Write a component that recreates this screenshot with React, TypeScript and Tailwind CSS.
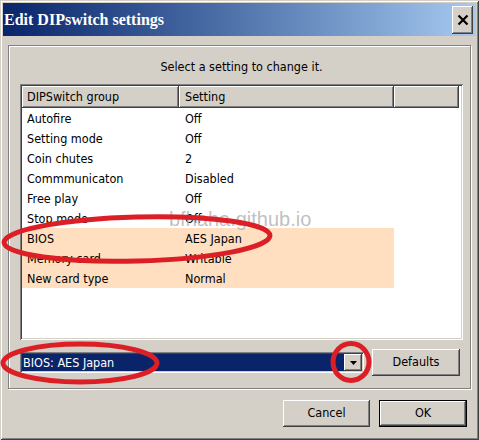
import React from "react";

const raised =
  "shadow-[inset_-1px_-1px_0_#404040,inset_1px_1px_0_#ffffff,inset_-2px_-2px_0_#808080,inset_2px_2px_0_#d4d0c8]";
const sunken =
  "shadow-[inset_1px_1px_0_#808080,inset_-1px_-1px_0_#ffffff,inset_2px_2px_0_#404040,inset_-2px_-2px_0_#d4d0c8]";

const rows: [string, string, boolean][] = [
  ["Autofire", "Off", false],
  ["Setting mode", "Off", false],
  ["Coin chutes", "2", false],
  ["Commmunicaton", "Disabled", false],
  ["Free play", "Off", false],
  ["Stop mode", "Off", false],
  ["BIOS", "AES Japan", true],
  ["Memory card", "Writable", true],
  ["New card type", "Normal", true],
];

export default function App() {
  return (
    <div
      className="relative w-[479px] h-[440px] overflow-hidden bg-[#d4d0c8] p-[3px] flex flex-col text-[12.5px] text-black shadow-[inset_1px_1px_0_#d4d0c8,inset_-1px_-1px_0_#404040,inset_2px_2px_0_#ffffff,inset_-2px_-2px_0_#808080]"
      style={{ fontFamily: '"DejaVu Sans Condensed", "DejaVu Sans", sans-serif' }}
    >
      {/* Title bar */}
      <div className="h-[33px] flex items-center justify-between pl-[1px] pr-[3px] bg-gradient-to-r from-[#0a246a] to-[#a6caf0]">
        <span
          className="text-white font-bold text-[16px] leading-none pt-[1px]"
          style={{ fontFamily: '"Liberation Serif", serif' }}
        >
          Edit DIPswitch settings
        </span>
        <div className={`w-[21px] h-[28px] bg-[#d4d0c8] ${raised} flex items-center justify-center`}>
          <svg width="12" height="12" viewBox="0 0 12 12">
            <path d="M1.5 1.5 L10.5 10.5 M10.5 1.5 L1.5 10.5" stroke="#000" strokeWidth="2.2" />
          </svg>
        </div>
      </div>

      {/* Content */}
      <div className="flex flex-col px-[5px] pt-[9px]">
        {/* Group box */}
        <div className="h-[344px] border border-[#808080] shadow-[inset_1px_1px_0_#ffffff,1px_1px_0_#ffffff] pl-[11px] pr-[7px] flex flex-col">
          <div className="h-[38px] flex items-center justify-center pt-[4px]">
            Select a setting to change it.
          </div>
          {/* List view */}
          <div className={`h-[256px] bg-white p-[2px] ${sunken} flex flex-col`}>
            <div className="h-[22px] flex shrink-0">
              <div className={`w-[157px] bg-[#d4d0c8] ${raised} flex items-center pl-[5px] pt-[1px]`}>DIPSwitch group</div>
              <div className={`w-[215px] bg-[#d4d0c8] ${raised} flex items-center pl-[6px] pt-[1px]`}>Setting</div>
              <div className={`w-[65px] bg-[#d4d0c8] ${raised}`}></div>
            </div>
            {rows.map(([g, s, hl]) => (
              <div key={g} className="h-[20px] flex">
                <div className={`w-[372px] flex items-center pt-[2px] ${hl ? "bg-[#ffdfc0]" : ""}`}>
                  <div className="w-[157px] pl-[5px]">{g}</div>
                  <div className="w-[215px] pl-[6px]">{s}</div>
                </div>
              </div>
            ))}
          </div>
          {/* combo row */}
          <div className="mt-[9px] flex items-center">
            <div className={`w-[344px] h-[21px] bg-white p-[2px] ${sunken} flex`}>
              <div className="flex-1 bg-[#0a246a] text-white flex items-center pl-[1px] pt-[1px]">BIOS: AES Japan</div>
              <div className={`w-[18px] bg-[#d4d0c8] ${raised} flex items-center justify-center`}>
                <svg width="7" height="4" viewBox="0 0 7 4">
                  <path d="M0 0 H7 L3.5 4 Z" fill="#000" />
                </svg>
              </div>
            </div>
            <div className={`ml-[8px] w-[88px] h-[27px] bg-[#d4d0c8] ${raised} flex items-center justify-center`}>
              Defaults
            </div>
          </div>
        </div>

        {/* Bottom buttons */}
        <div className="mt-[11px] flex justify-end pr-[4px] gap-[9px]">
          <div className={`w-[87px] h-[27px] bg-[#d4d0c8] ${raised} flex items-center justify-center`}>
            Cancel
          </div>
          <div className="w-[88px] h-[27px] border border-black">
            <div className={`w-full h-full bg-[#d4d0c8] ${raised} flex items-center justify-center`}>OK</div>
          </div>
        </div>
      </div>

      {/* Watermark */}
      <div
        className="absolute left-[169px] top-[209px] text-[20px] text-[#b0b0b0]/80 leading-none"
        style={{ fontFamily: '"Liberation Sans", sans-serif' }}
      >
        bfhaha.github.io
      </div>

      {/* Red annotations */}
      <svg className="absolute left-0 top-0 pointer-events-none" width="479" height="440">
        <ellipse cx="137" cy="239" rx="133" ry="22" fill="none" stroke="#dc1f26" strokeWidth="5" transform="rotate(-1.5 137 239)" />
        <ellipse cx="80" cy="363" rx="77" ry="19" fill="none" stroke="#dc1f26" strokeWidth="5" />
        <ellipse cx="351" cy="362" rx="18" ry="18.5" fill="none" stroke="#dc1f26" strokeWidth="5" />
      </svg>
    </div>
  );
}
